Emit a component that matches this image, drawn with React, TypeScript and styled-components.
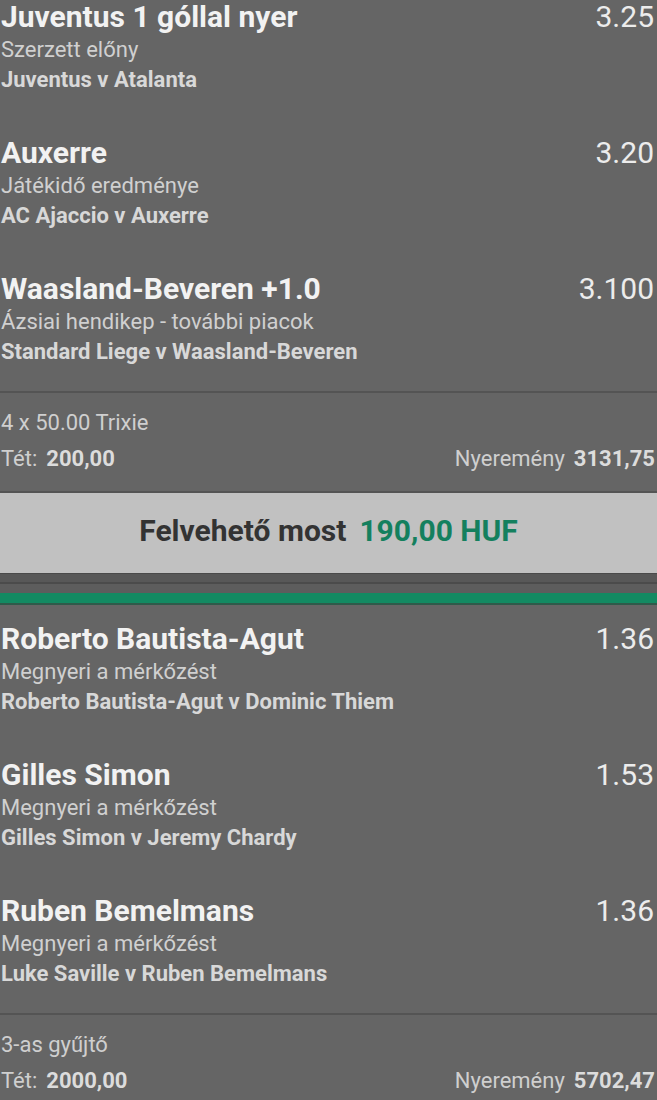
import styled, { createGlobalStyle } from "styled-components";

const GlobalStyle = createGlobalStyle`
  html, body {
    margin: 0;
    padding: 0;
    background: #656565;
    font-family: Roboto, "Noto Sans", "Liberation Sans", sans-serif;
    overflow: hidden;
  }
`;

const Page = styled.div`
  width: 657px;
  height: 1100px;
  overflow: hidden;
  background: #656565;
`;

// first row of the list is scrolled partly out of view
const Selection = styled.div<{ $first?: boolean }>`
  height: ${(p) => (p.$first ? 119 : 136)}px;
  box-sizing: border-box;
  padding: ${(p) => (p.$first ? 0 : 17)}px 3px 0 1px;
`;

const TopLine = styled.div`
  display: flex;
  justify-content: space-between;
  align-items: baseline;
  line-height: 33px;
`;

const Title = styled.span`
  font-size: 30px;
  font-weight: 700;
  color: #f2f2f2;
`;

const Odds = styled.span`
  font-size: 30px;
  font-weight: 400;
  color: #ececec;
`;

const Market = styled.div`
  font-size: 22px;
  line-height: 34px;
  color: #d0d0d0;
`;

const Match = styled.div`
  font-size: 22px;
  font-weight: 700;
  line-height: 26px;
  color: #d8d8d8;
`;

const Summary = styled.div`
  border-top: 2px solid #545454;
  border-bottom: 2px solid #545454;
  padding: 14px 2px 12px 1px;
`;

const BetType = styled.div`
  font-size: 22px;
  line-height: 32px;
  color: #cfcfcf;
`;

const StakeRow = styled.div`
  display: flex;
  justify-content: space-between;
  align-items: baseline;
  line-height: 40px;
  font-size: 22px;
  color: #cfcfcf;
`;

const Label = styled.span`
  font-weight: 400;
  margin-right: 9px;
`;

const Value = styled.span`
  font-weight: 700;
  color: #dcdcdc;
`;

const CashOut = styled.div`
  height: 80px;
  box-sizing: border-box;
  padding-bottom: 6px;
  background: #c1c1c1;
  display: flex;
  align-items: center;
  justify-content: center;
  gap: 13px;
  font-size: 30px;
  font-weight: 700;
`;

const CashLabel = styled.span`
  color: #333333;
`;

const CashAmount = styled.span`
  color: #14805e;
`;

const Separator = styled.div`
  display: flex;
  flex-direction: column;
`;

const Band = styled.div<{ $h: number; $c: string }>`
  height: ${(p) => p.$h}px;
  background: ${(p) => p.$c};
`;

type Sel = { title: string; odds: string; market: string; match: string };

const group1: Sel[] = [
  { title: "Juventus 1 góllal nyer", odds: "3.25", market: "Szerzett előny", match: "Juventus v Atalanta" },
  { title: "Auxerre", odds: "3.20", market: "Játékidő eredménye", match: "AC Ajaccio v Auxerre" },
  {
    title: "Waasland-Beveren +1.0",
    odds: "3.100",
    market: "Ázsiai hendikep - további piacok",
    match: "Standard Liege v Waasland-Beveren",
  },
];

const group2: Sel[] = [
  {
    title: "Roberto Bautista-Agut",
    odds: "1.36",
    market: "Megnyeri a mérkőzést",
    match: "Roberto Bautista-Agut v Dominic Thiem",
  },
  { title: "Gilles Simon", odds: "1.53", market: "Megnyeri a mérkőzést", match: "Gilles Simon v Jeremy Chardy" },
  { title: "Ruben Bemelmans", odds: "1.36", market: "Megnyeri a mérkőzést", match: "Luke Saville v Ruben Bemelmans" },
];

function SelectionItem({ sel, first }: { sel: Sel; first?: boolean }) {
  return (
    <Selection $first={first}>
      <TopLine>
        <Title>{sel.title}</Title>
        <Odds>{sel.odds}</Odds>
      </TopLine>
      <Market>{sel.market}</Market>
      <Match>{sel.match}</Match>
    </Selection>
  );
}

function BetSlip({
  items,
  type,
  stake,
  win,
  scrolled,
}: {
  items: Sel[];
  type: string;
  stake: string;
  win: string;
  scrolled?: boolean;
}) {
  return (
    <div>
      {items.map((s, i) => (
        <SelectionItem key={s.title} sel={s} first={scrolled && i === 0} />
      ))}
      <Summary>
        <BetType>{type}</BetType>
        <StakeRow>
          <span>
            <Label>Tét:</Label>
            <Value>{stake}</Value>
          </span>
          <span>
            <Label>Nyeremény</Label>
            <Value>{win}</Value>
          </span>
        </StakeRow>
      </Summary>
    </div>
  );
}

export default function App() {
  return (
    <Page>
      <GlobalStyle />
      <BetSlip items={group1} type="4 x 50.00 Trixie" stake="200,00" win="3131,75" scrolled />
      <CashOut>
        <CashLabel>Felvehető most</CashLabel>
        <CashAmount>190,00 HUF</CashAmount>
      </CashOut>
      <Separator>
        <Band $h={1} $c="#4a4a4a" />
        <Band $h={8} $c="#585858" />
        <Band $h={2} $c="#4b4b4b" />
        <Band $h={9} $c="#5d5d5d" />
        <Band $h={10} $c="#138a62" />
        <Band $h={2} $c="#2f5a4a" />
      </Separator>
      <BetSlip items={group2} type="3-as gyűjtő" stake="2000,00" win="5702,47" />
    </Page>
  );
}
